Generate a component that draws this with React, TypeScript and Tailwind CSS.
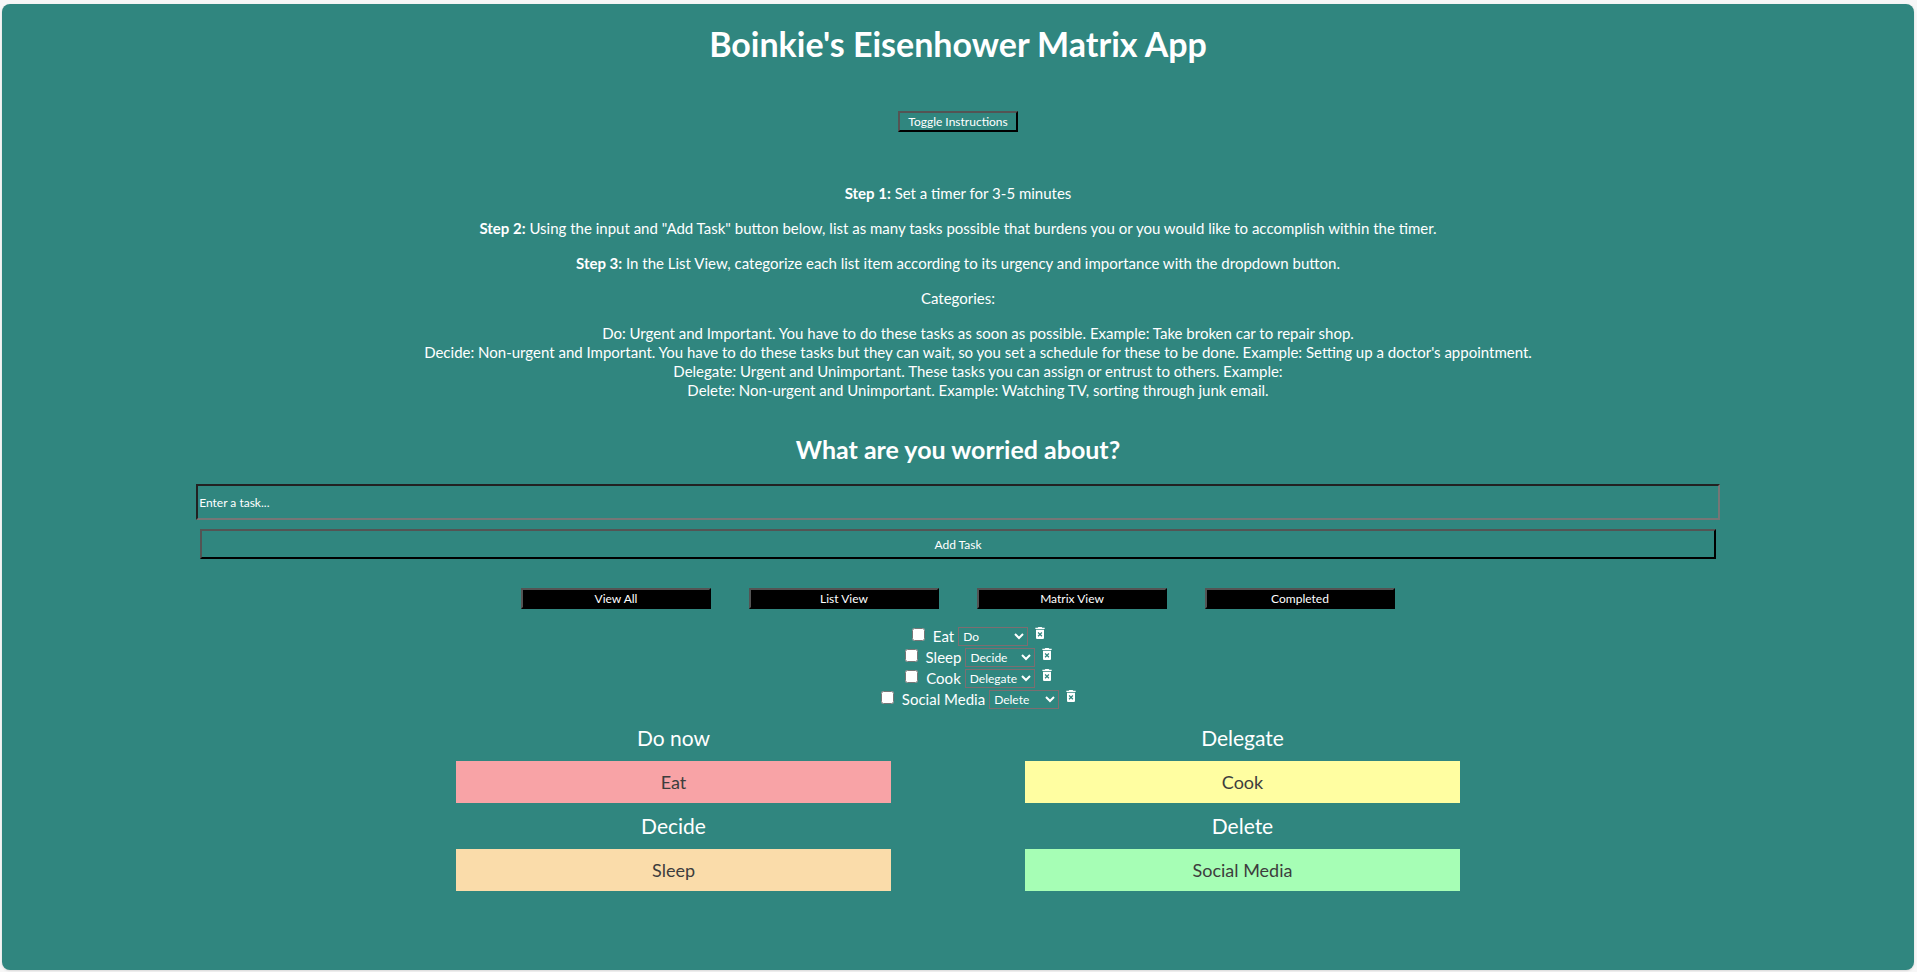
import { useState, type FormEvent } from "react";
import { MdDeleteForever } from "react-icons/md";

type Category = "Do" | "Decide" | "Delegate" | "Delete";
type Task = { id: number; name: string; category: Category; done: boolean };

const categories: Category[] = ["Do", "Decide", "Delegate", "Delete"];

const initialTasks: Task[] = [
  { id: 1, name: "Eat", category: "Do", done: false },
  { id: 2, name: "Sleep", category: "Decide", done: false },
  { id: 3, name: "Cook", category: "Delegate", done: false },
  { id: 4, name: "Social Media", category: "Delete", done: false },
];

const quadrants: { title: string; category: Category; color: string }[] = [
  { title: "Do now", category: "Do", color: "bg-[#f8a3a6]" },
  { title: "Delegate", category: "Delegate", color: "bg-[#fffea1]" },
  { title: "Decide", category: "Decide", color: "bg-[#fadcaa]" },
  { title: "Delete", category: "Delete", color: "bg-[#a6feb5]" },
];

const raised =
  "border-2 border-t-[#545454] border-l-[#545454] border-r-black border-b-black text-xs leading-[17px] text-white";

function Instructions() {
  return (
    <section className="flex flex-col gap-4">
      <p><strong>Step 1:</strong> Set a timer for 3-5 minutes</p>
      <p>
        <strong>Step 2:</strong> Using the input and "Add Task" button below, list as many tasks
        possible that burdens you or you would like to accomplish within the timer.
      </p>
      <p>
        <strong>Step 3:</strong> In the List View, categorize each list item according to its
        urgency and importance with the dropdown button.
      </p>
      <p>Categories:</p>
      <ul className="pl-10">
        <li>Do: Urgent and Important. You have to do these tasks as soon as possible. Example: Take broken car to repair shop.</li>
        <li>Decide: Non-urgent and Important. You have to do these tasks but they can wait, so you set a schedule for these to be done. Example: Setting up a doctor's appointment.</li>
        <li>Delegate: Urgent and Unimportant. These tasks you can assign or entrust to others. Example:</li>
        <li>Delete: Non-urgent and Unimportant. Example: Watching TV, sorting through junk email.</li>
      </ul>
    </section>
  );
}

export default function App() {
  const [tasks, setTasks] = useState(initialTasks);
  const [open, setOpen] = useState(true);
  const [draft, setDraft] = useState("");
  const [view, setView] = useState("View All");

  const update = (id: number, change: Partial<Task>) =>
    setTasks(tasks.map((t) => (t.id === id ? { ...t, ...change } : t)));

  const addTask = (e: FormEvent) => {
    e.preventDefault();
    if (!draft.trim()) return;
    setTasks([...tasks, { id: Date.now(), name: draft.trim(), category: "Do", done: false }]);
    setDraft("");
  };

  const listed = view === "Completed" ? tasks.filter((t) => t.done) : tasks;

  return (
    <div className="flex min-h-screen flex-col bg-[#f7f7f7] pt-1 pr-[3px] pb-0.5 pl-0.5 font-['Lato','Gill_Sans',sans-serif]">
      <main className="flex-1 rounded-lg bg-[#30867f] pb-6 text-center text-[15px] leading-[19px] text-white shadow-sm">
        <h1 className="pt-[21px] text-[34px] leading-[38px] font-bold">Boinkie's Eisenhower Matrix App</h1>
        <div className="pt-12 pb-[52px]">
          <button type="button" onClick={() => setOpen(!open)} className={`mx-auto block px-2 ${raised}`}>
            Toggle Instructions
          </button>
        </div>
        {open && <Instructions />}

        <h2 className="pt-[34px] text-[25px] leading-[30px] font-bold">What are you worried about?</h2>

        <form onSubmit={addTask} className="mx-auto w-4/5 pt-5">
          <div className="px-[3px]">
            <input
              type="text"
              aria-label="Task"
              placeholder="Enter a task..."
              value={draft}
              onChange={(e) => setDraft(e.target.value)}
              className="block h-9 w-full border-2 border-t-[#222] border-r-[#767676] border-b-[#767676] border-l-[#222] px-px text-xs placeholder:text-white"
            />
          </div>
          <div className="px-[7px] pt-[9px]">
            <button type="submit" className={`block h-[30px] w-full ${raised}`}>Add Task</button>
          </div>
        </form>

        <nav className="flex justify-center gap-[38px] pt-[29px]">
          {["View All", "List View", "Matrix View", "Completed"].map((label) => (
            <button key={label} type="button" onClick={() => setView(label)} className={`w-[190px] bg-black ${raised}`}>
              {label}
            </button>
          ))}
        </nav>

        {view !== "Matrix View" && (
          <ul className="pt-[17px] pl-10">
            {listed.map((task) => (
              <li key={task.id} className="flex h-[21px] items-center justify-center">
                <input
                  id={`task-${task.id}`}
                  type="checkbox"
                  checked={task.done}
                  onChange={(e) => update(task.id, { done: e.target.checked })}
                  className="mr-2 mb-1 ml-1 size-[13px]"
                />
                <label htmlFor={`task-${task.id}`} className="mr-1">{task.name}</label>
                <select
                  aria-label={`Category of ${task.name}`}
                  value={task.category}
                  onChange={(e) => update(task.id, { category: e.target.value as Category })}
                  className="mr-1 h-[19px] w-[70px] border border-[#7d6d70] bg-transparent text-xs"
                >
                  {categories.map((c) => (
                    <option key={c} className="text-black">{c}</option>
                  ))}
                </select>
                <button
                  type="button"
                  aria-label={`Remove ${task.name}`}
                  onClick={() => setTasks(tasks.filter((t) => t.id !== task.id))}
                  className="pb-2"
                >
                  <MdDeleteForever className="size-4" />
                </button>
              </li>
            ))}
          </ul>
        )}

        {(view === "View All" || view === "Matrix View") && (
          <div className="mx-auto grid max-w-[1004px] grid-cols-2 gap-x-[134px] gap-y-2.5 pt-[15px]">
            {quadrants.map(({ title, category, color }) => (
              <section key={category}>
                <h3 className="pb-2.5 text-[21px] leading-[26px]">{title}</h3>
                <ul className={`min-h-[42px] py-2 text-lg leading-[26px] text-[#3d3d3d] ${color}`}>
                  {tasks.filter((t) => t.category === category).map((t) => (
                    <li key={t.id}>{t.name}</li>
                  ))}
                </ul>
              </section>
            ))}
          </div>
        )}
      </main>
    </div>
  );
}
